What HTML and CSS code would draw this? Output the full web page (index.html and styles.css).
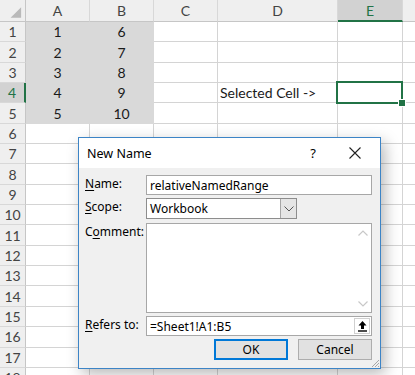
FILE: index.html
```html
<!DOCTYPE html>
<html>
<head>
<meta charset="utf-8">
<link rel="stylesheet" href="styles.css">
</head>
<body>
<div class="sheet">
  <div class="grid">
    <div class="corner"><svg width="26" height="22" viewBox="0 0 26 22"><polygon points="22,7 22,18 11,18" fill="#b9b9b9"/></svg></div>
    <div class="colh">A</div><div class="colh">B</div><div class="colh">C</div><div class="colh">D</div><div class="colh sel">E</div><div class="colh last"></div>

    <div class="rowh">1</div><div class="c hl">1</div><div class="c hl">6</div><div class="c"></div><div class="c"></div><div class="c"></div><div class="c last"></div>
    <div class="rowh">2</div><div class="c hl">2</div><div class="c hl">7</div><div class="c"></div><div class="c"></div><div class="c"></div><div class="c last"></div>
    <div class="rowh">3</div><div class="c hl">3</div><div class="c hl">8</div><div class="c"></div><div class="c"></div><div class="c"></div><div class="c last"></div>
    <div class="rowh sel">4</div><div class="c hl">4</div><div class="c hl">9</div><div class="c"></div><div class="c left">Selected Cell -&gt;</div><div class="c active"><span class="handle"></span></div><div class="c last"></div>
    <div class="rowh">5</div><div class="c hl">5</div><div class="c hl">10</div><div class="c"></div><div class="c"></div><div class="c"></div><div class="c last"></div>
    <div class="rowh">6</div><div class="c"></div><div class="c"></div><div class="c"></div><div class="c"></div><div class="c"></div><div class="c last"></div>
    <div class="rowh">7</div><div class="c"></div><div class="c"></div><div class="c"></div><div class="c"></div><div class="c"></div><div class="c last"></div>
    <div class="rowh">8</div><div class="c"></div><div class="c"></div><div class="c"></div><div class="c"></div><div class="c"></div><div class="c last"></div>
    <div class="rowh">9</div><div class="c"></div><div class="c"></div><div class="c"></div><div class="c"></div><div class="c"></div><div class="c last"></div>
    <div class="rowh">10</div><div class="c"></div><div class="c"></div><div class="c"></div><div class="c"></div><div class="c"></div><div class="c last"></div>
    <div class="rowh">11</div><div class="c"></div><div class="c"></div><div class="c"></div><div class="c"></div><div class="c"></div><div class="c last"></div>
    <div class="rowh">12</div><div class="c"></div><div class="c"></div><div class="c"></div><div class="c"></div><div class="c"></div><div class="c last"></div>
    <div class="rowh">13</div><div class="c"></div><div class="c"></div><div class="c"></div><div class="c"></div><div class="c"></div><div class="c last"></div>
    <div class="rowh">14</div><div class="c"></div><div class="c"></div><div class="c"></div><div class="c"></div><div class="c"></div><div class="c last"></div>
    <div class="rowh">15</div><div class="c"></div><div class="c"></div><div class="c"></div><div class="c"></div><div class="c"></div><div class="c last"></div>
    <div class="rowh">16</div><div class="c"></div><div class="c"></div><div class="c"></div><div class="c"></div><div class="c"></div><div class="c last"></div>
    <div class="rowh">17</div><div class="c"></div><div class="c"></div><div class="c"></div><div class="c"></div><div class="c"></div><div class="c last"></div>
    <div class="rowh">18</div><div class="c"></div><div class="c"></div><div class="c"></div><div class="c"></div><div class="c"></div><div class="c last"></div>
  </div>

  <div class="dialog">
    <div class="titlebar">
      <span class="title">New Name</span>
      <span class="help">?</span>
      <span class="close"><svg width="12" height="12" viewBox="0 0 12 12"><path d="M0.5 0.5 L11.5 11.5 M11.5 0.5 L0.5 11.5" stroke="#222" stroke-width="1.1" fill="none"/></svg></span>
    </div>
    <div class="dbody">
      <div class="frow">
        <label class="lbl"><u>N</u>ame:</label>
        <div class="field">relativeNamedRange</div>
      </div>
      <div class="frow r-scope">
        <label class="lbl"><u>S</u>cope:</label>
        <div class="select"><span class="sval">Workbook</span><span class="drop"><svg width="10" height="6" viewBox="0 0 10 6"><path d="M0.5 0.5 L5 5 L9.5 0.5" stroke="#555" stroke-width="1" fill="none"/></svg></span></div>
      </div>
      <div class="frow r-comment">
        <label class="lbl">C<u>o</u>mment:</label>
        <div class="textarea"><div class="sbar"><svg width="10" height="6" viewBox="0 0 10 6"><path d="M0.5 5.5 L5 1 L9.5 5.5" stroke="#c8c8c8" stroke-width="1.2" fill="none"/></svg><svg width="10" height="6" viewBox="0 0 10 6"><path d="M0.5 0.5 L5 5 L9.5 0.5" stroke="#c8c8c8" stroke-width="1.2" fill="none"/></svg></div></div>
      </div>
      <div class="frow r-refers">
        <label class="lbl"><u>R</u>efers to:</label>
        <div class="field refers"><span>=Sheet1!A1:B5</span><span class="rbtn"><svg width="11" height="12" viewBox="0 0 11 12"><path d="M5.5 1 L1.5 5.5 L4 5.5 L4 9 L7 9 L7 5.5 L9.5 5.5 Z" fill="#000"/><rect x="1" y="10.3" width="9" height="1.4" fill="#000"/></svg></span></div>
      </div>
      <div class="buttons">
        <div class="btn default">OK</div>
        <div class="btn">Cancel</div>
      </div>
      <svg class="grip" width="10" height="10" viewBox="0 0 10 10"><path d="M9 2 L2 9 M9 5 L5 9 M9 8 L8 9" stroke="#a8a8a8" stroke-width="1"/></svg>
    </div>
  </div>
</div>
</body>
</html>
```
FILE: styles.css
```css
html, body {
  margin: 0;
  padding: 0;
  background: #fff;
  overflow: hidden;
}
.sheet {
  position: relative;
  width: 415px;
  height: 375px;
  overflow: hidden;
}
.grid {
  display: grid;
  grid-template-columns: 26px 64px 64px 64px 120px 65px 32px;
  grid-template-rows: 22px repeat(18, 20.35px);
  font-family: "Lato", "Open Sans", sans-serif;
  font-size: 14px;
  color: #1a1a1a;
}
.grid > div {
  box-sizing: border-box;
  border-right: 1px solid #d4d4d4;
  border-bottom: 1px solid #d4d4d4;
  display: flex;
  align-items: center;
  justify-content: center;
  white-space: nowrap;
}
.corner {
  background: #efefef;
  border-right-color: #c6c6c6 !important;
  border-bottom-color: #c6c6c6 !important;
}
.colh {
  background: #efefef;
  color: #444;
  font-size: 14px;
  border-bottom-color: #c6c6c6 !important;
  border-right-color: #d8d8d8 !important;
}
.colh.sel {
  background: #d2d2d2;
  color: #217346;
  border-bottom: 2px solid #217346 !important;
}
.rowh {
  background: #efefef;
  color: #444;
  font-size: 14px;
  border-right-color: #c6c6c6 !important;
  border-bottom-color: #d8d8d8 !important;
}
.rowh.sel {
  background: #d2d2d2;
  color: #217346;
  border-right: 2px solid #217346 !important;
}
.c.hl {
  background: #d9d9d9;
  border-right-color: #d9d9d9;
  border-bottom-color: #d9d9d9;
}
.c.left {
  justify-content: flex-start;
  padding-left: 2px;
}
.c.active {
  position: relative;
  overflow: visible;
}
.c.active::before {
  content: "";
  position: absolute;
  left: -2px;
  top: -2px;
  right: -1px;
  bottom: -2px;
  border: 2px solid #217346;
}
.handle {
  position: absolute;
  right: -4px;
  bottom: -5px;
  width: 6px;
  height: 6px;
  background: #217346;
  border: 1px solid #fff;
  z-index: 2;
}

/* Dialog */
.dialog {
  position: absolute;
  left: 78px;
  top: 137px;
  width: 303px;
  height: 232px;
  box-sizing: border-box;
  border: 1px solid #3c84c6;
  background: #f0f0f0;
  box-shadow: 4px 5px 14px rgba(0, 0, 0, 0.28);
  font-family: "Noto Sans", "Open Sans", sans-serif;
  font-size: 12px;
  color: #000;
  display: flex;
  flex-direction: column;
}
.titlebar {
  height: 30px;
  background: #fff;
  display: flex;
  align-items: center;
  padding-left: 8px;
  padding-right: 19px;
  flex-shrink: 0;
}
.title {
  flex: 1;
  font-size: 12.5px;
  color: #000;
}
.help {
  font-size: 13px;
  margin-right: 33px;
}
.close {
  display: flex;
}
.dbody {
  position: relative;
  flex: 1;
  padding: 7px 8px 0 6px;
  display: flex;
  flex-direction: column;
}
.frow {
  display: flex;
  align-items: flex-start;
}
.lbl {
  width: 61px;
  flex-shrink: 0;
  padding-top: 1px;
  line-height: 16px;
}
.lbl u {
  text-decoration-thickness: 1px;
  text-underline-offset: 2px;
}
.field {
  flex: 1;
  height: 20px;
  box-sizing: border-box;
  background: #fff;
  border: 1px solid #a7a7a7;
  display: flex;
  align-items: center;
  padding-left: 3px;
  white-space: nowrap;
}
.r-scope {
  margin-top: 3px;
}
.select {
  width: 151px;
  height: 21px;
  box-sizing: border-box;
  background: #fff;
  border: 1px solid #8d8d8d;
  display: flex;
  align-items: center;
  padding-left: 3px;
}
.sval {
  flex: 1;
}
.drop {
  width: 16px;
  height: 19px;
  box-sizing: border-box;
  background: #e5e5e5;
  border-left: 1px solid #a6a6a6;
  display: flex;
  align-items: center;
  justify-content: center;
}
.r-comment {
  margin-top: 4px;
}
.textarea {
  flex: 1;
  height: 90px;
  box-sizing: border-box;
  background: #fff;
  border: 1px solid #a7a7a7;
  display: flex;
  justify-content: flex-end;
}
.sbar {
  width: 17px;
  display: flex;
  flex-direction: column;
  justify-content: space-between;
  align-items: center;
  padding: 6px 0 5px;
}
.r-refers {
  margin-top: 3px;
}
.refers {
  justify-content: space-between;
  padding-right: 1px;
}
.rbtn {
  width: 16px;
  height: 16px;
  box-sizing: border-box;
  border: 1px solid #d0d0d0;
  background: #fff;
  display: flex;
  align-items: center;
  justify-content: center;
}
.buttons {
  display: flex;
  justify-content: flex-end;
  gap: 10px;
  margin-top: 3px;
}
.btn {
  width: 74px;
  height: 21px;
  box-sizing: border-box;
  background: #e1e1e1;
  border: 1px solid #adadad;
  display: flex;
  align-items: center;
  justify-content: center;
}
.btn.default {
  border: 2px solid #0078d7;
}
.grip {
  position: absolute;
  right: 0;
  bottom: 0;
}
```
